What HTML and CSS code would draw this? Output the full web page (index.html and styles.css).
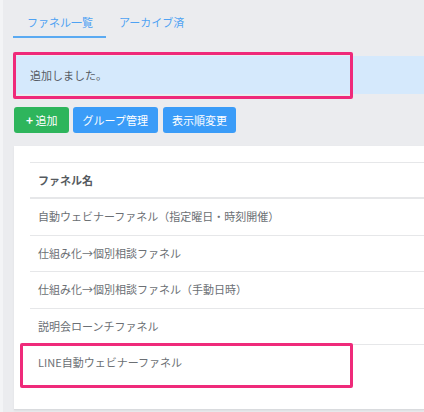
FILE: index.html
```html
<!DOCTYPE html>
<html lang="ja">
<head>
<meta charset="utf-8">
<link rel="stylesheet" href="styles.css">
</head>
<body>
<div class="page">
  <div class="tabs">
    <div class="tab active">ファネル一覧</div>
    <div class="tab">アーカイブ済</div>
  </div>
  <div class="alert">
    追加しました。
    <div class="mark mark-alert"></div>
  </div>
  <div class="buttons">
    <button class="btn btn-green"><span class="plus">+</span> 追加</button>
    <button class="btn btn-blue">グループ管理</button>
    <button class="btn btn-blue">表示順変更</button>
  </div>
  <div class="card">
    <div class="table">
      <div class="row head">ファネル名</div>
      <div class="row">自動ウェビナーファネル（指定曜日・時刻開催）</div>
      <div class="row">仕組み化→個別相談ファネル</div>
      <div class="row">仕組み化→個別相談ファネル（手動日時）</div>
      <div class="row">説明会ローンチファネル</div>
      <div class="row last">LINE自動ウェビナーファネル<div class="mark mark-row"></div></div>
    </div>
  </div>
</div>
</body>
</html>
```
FILE: styles.css
```css
html, body {
  margin: 0;
  padding: 0;
  width: 424px;
  height: 412px;
  overflow: hidden;
  background: #ebecef;
}
body {
  font-family: "Noto Sans CJK JP", "Noto Sans", sans-serif;
  font-size: 11px;
  border-left: 3px solid #f3f4f6;
  box-sizing: border-box;
}
.page {
  width: 421px;
  box-sizing: border-box;
  padding: 8px 0 0 11px;
}
.tabs {
  display: flex;
  height: 30px;
}
.tab {
  padding: 0 13px 0 13px;
  line-height: 28px;
  color: #4ea2f3;
  border-bottom: 2px solid transparent;
}
.tab.active {
  margin-left: -1px;
  padding-left: 14px;
  border-bottom-color: #5aaaf2;
}
.alert {
  position: relative;
  margin-top: 18px;
  height: 38px;
  line-height: 38px;
  padding-left: 16px;
  background: #d5e9fc;
  color: #555b63;
}
.mark {
  position: absolute;
  border: 3px solid #ef2a7a;
  border-radius: 2px;
  box-sizing: border-box;
}
.mark-alert {
  left: -1px;
  top: -4px;
  width: 340px;
  height: 47px;
}
.buttons {
  display: flex;
  gap: 4px;
  margin-top: 13px;
}
.btn {
  height: 26px;
  padding: 0 10px;
  border: 0;
  border-radius: 3px;
  color: #fff;
  font-family: inherit;
  font-size: 11px;
  line-height: 26px;
}
.btn-green {
  background: #2eb55c;
  padding: 0 11px 0 12px;
}
.plus {
  font-weight: bold;
  font-size: 12px;
}
.btn-blue {
  background: #3a9cf8;
}
.btn-blue + .btn-blue {
  margin-left: 1px;
  padding: 0 9px;
}
.card {
  margin-top: 13px;
  background: #fff;
  padding: 16px 0 27px 16px;
  border-bottom: 1px solid #d9dbde;
  box-shadow: 0 1px 2px rgba(0,0,0,0.06);
}
.row {
  position: relative;
  box-sizing: border-box;
  height: 36.5px;
  line-height: 35.5px;
  padding-left: 8px;
  color: #6b6f74;
  border-bottom: 1px solid #e6e7e9;
}
.row.head {
  height: 37px;
  line-height: 34px;
  border-top: 1px solid #e6e7e9;
  border-bottom: 2px solid #e6e7e9;
  font-weight: bold;
  color: #555a60;
}
.row.last {
  border-bottom: 0;
}
.mark-row {
  left: -10px;
  top: -2px;
  width: 333px;
  height: 45px;
}
```
